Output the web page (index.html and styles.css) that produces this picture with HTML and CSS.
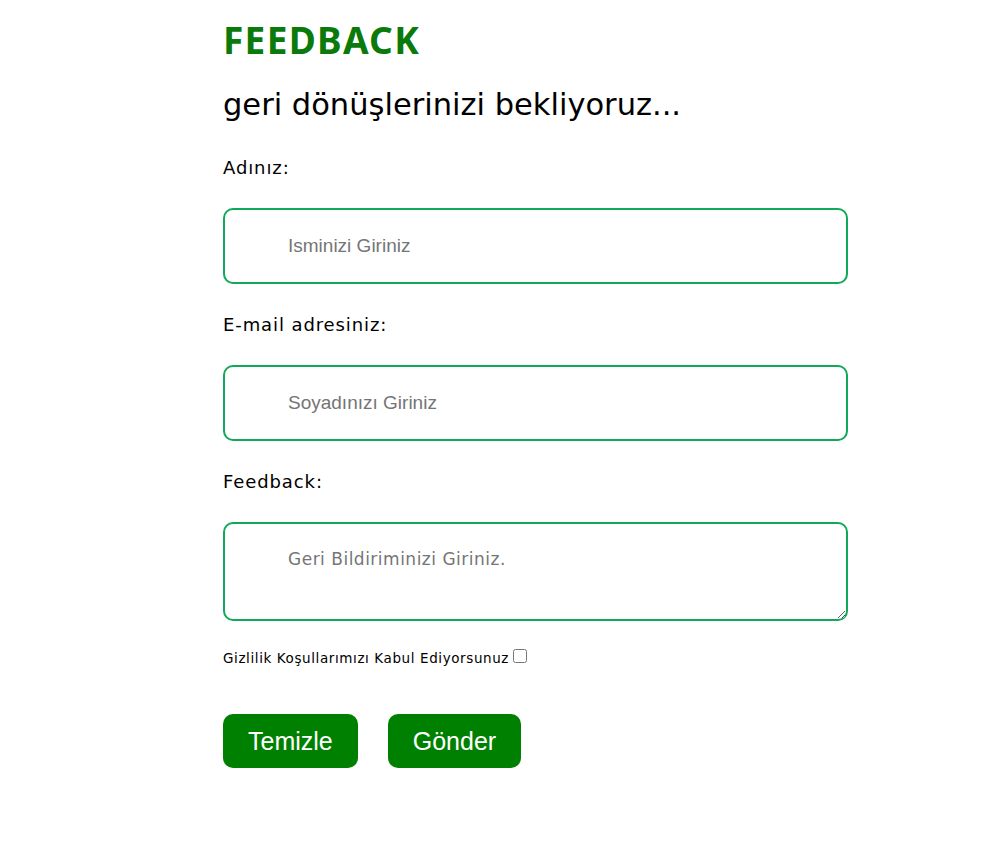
FILE: index.html
```html
<!DOCTYPE html>
<html lang="tr">
<head>
<meta charset="utf-8">
<title>Feedback</title>
<link rel="stylesheet" href="styles.css">
</head>
<body>
<main class="page">
  <form class="form">
    <h1 class="title">FEEDBACK</h1>
    <h2 class="subtitle">geri dönüşlerinizi bekliyoruz...</h2>
    <label class="label" for="ad">Adınız:</label>
    <input class="field" id="ad" type="text" placeholder="Isminizi Giriniz">
    <label class="label" for="mail">E-mail adresiniz:</label>
    <input class="field" id="mail" type="text" placeholder="Soyadınızı Giriniz">
    <label class="label" for="fb">Feedback:</label>
    <textarea class="area" id="fb" placeholder="Geri Bildiriminizi Giriniz."></textarea>
    <div class="terms"><span>Gizlilik Koşullarımızı Kabul Ediyorsunuz</span><input class="check" type="checkbox"></div>
    <div class="buttons">
      <button class="btn" type="reset">Temizle</button>
      <button class="btn" type="submit">Gönder</button>
    </div>
  </form>
</main>
</body>
</html>
```
FILE: styles.css
```css
* { box-sizing: border-box; }
html, body { margin: 0; padding: 0; background: #fff; }
body { font-family: "DejaVu Sans", "Noto Sans", sans-serif; color: #000; }
.page { padding: 20px 0 0 223px; }
.form { display: flex; flex-direction: column; width: 625px; }
.title {
  margin: 0; height: 40px; line-height: 40px;
  font-family: "Noto Sans", sans-serif;
  font-size: 37px; font-weight: 700; color: #0a7a0a; letter-spacing: 1.3px;
}
.subtitle {
  margin: 25px 0 0; height: 40px; line-height: 40px;
  font-size: 30.5px; font-weight: 400;
}
.label {
  display: block; height: 24px; line-height: 24px; font-size: 18px; margin-top: 31px;
  letter-spacing: 0.9px;
}
.field + .label, .area + .label { margin-top: 29px; }
.field {
  margin-top: 28px; height: 76px; width: 625px;
  border: 2px solid #12a85a; border-radius: 10px;
  padding: 0 0 0 63px; font-family: "Liberation Sans", Arial, sans-serif; font-size: 19px;
  outline: none;
}
.field::placeholder { color: #757575; }
.area {
  margin-top: 28px; height: 99px; width: 625px;
  border: 2px solid #12a85a; border-radius: 10px;
  padding: 22px 0 0 63px; font-family: "DejaVu Sans", sans-serif; font-size: 17px; line-height: 26px;
  letter-spacing: 0.5px;
  resize: vertical; outline: none;
}
.area::placeholder { color: #757575; }
.terms {
  margin-top: 27px; height: 20px; display: flex; align-items: center;
  font-size: 13.5px; letter-spacing: 0.6px;
}
.check { margin: 0 0 4px 4px; width: 14px; height: 14px; }
.buttons { margin-top: 46px; display: flex; gap: 30px; }
.btn {
  height: 54px; padding: 0 25px; border: none; border-radius: 10px;
  background: #008000; color: #fff; font-family: "Liberation Sans", Arial, sans-serif; font-size: 25px;
  cursor: pointer;
}
```
